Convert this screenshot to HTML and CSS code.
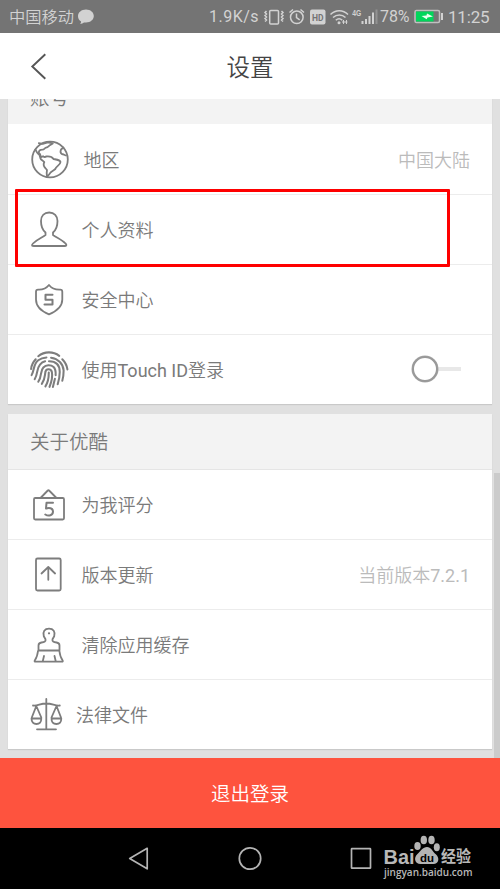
FILE: index.html
```html
<!DOCTYPE html>
<html lang="zh-CN">
<head>
<meta charset="utf-8">
<title>设置</title>
<link rel="stylesheet" href="styles.css">
</head>
<body>
<div class="phone">
  <div class="status">
    <span class="carrier">中国移动</span>
    <svg class="bubble" width="18" height="18" viewBox="77 8 18 18"><path fill="#d2d2d2" d="M86 9.500c4.500 0 7.800 2.900 7.800 6.500s-3.300 6.500-7.800 6.500l-2 0c-1 .8-2.300 1.300-3.800 1.500.6-.8.9-1.600.9-2.500-2-1.200-3.100-3.200-3.100-5.500 0-3.600 3.500-6.500 8-6.500z"/></svg>
    <span class="speed">1.9K/s</span>
    <svg class="signals" width="115" height="24" viewBox="263 5 115 24" fill="none" stroke="#d2d2d2" stroke-width="1.500">
      <rect x="269.700" y="10.500" width="8.800" height="13.500" rx="1"/>
      <path d="M266.500 11l-1.500 1.500 1.500 1.500-1.500 1.500 1.500 1.500-1.500 1.500 1.500 1.500-1.500 1.500M281.500 11l1.500 1.500-1.500 1.500 1.500 1.500-1.500 1.500 1.500 1.500-1.500 1.500 1.500 1.500"/>
      <circle cx="296.800" cy="17.300" r="6.300"/><path d="M296.500 13.500v4l3.200 2.300M289.500 12.500l3.500-3M304 12.500l-3.500-3"/>
      <rect x="310" y="9.500" width="15.500" height="15" rx="2" fill="#d2d2d2" stroke="none"/>
      <text class="hd" x="317.800" y="20.700">HD</text>
      <path d="M330.500 14.500c5-5 12.500-5 17.500 0M333 17.500c3.700-3.500 9-3.500 12.500 0M335.800 20.300c2-2 4.500-2 6.500 0"/>
      <circle cx="339" cy="22.800" r="1.500" fill="#d2d2d2" stroke="none"/><path stroke-width="1" d="M343.500 20v4M346.500 20v4M342 22h5.500"/>
      <text class="net" x="352.300" y="15.500" textLength="9" lengthAdjust="spacingAndGlyphs">4G</text>
      <path stroke-width="2" d="M362.500 21v3M366 19v5M369.500 16v8M373 12.500v11.500"/><path stroke="#929292" stroke-width="2" d="M376.500 9.500v14.500"/>
    </svg>
    <span class="percent">78%</span>
    <svg class="battery" width="29" height="16" viewBox="414 8 29 16"><rect x="415" y="9.500" width="24.500" height="12" rx="1.500" fill="#747474" stroke="#c0c0c0" stroke-width="1.500"/><path fill="#00d65b" d="M416 10.500h17.500v10H416z"/><path fill="#e8ffef" d="M421.500 15l5-.5.500-2 6 3-5.500 1-.8 1.800z"/><path stroke="#d2d2d2" stroke-width="2" d="M442 12v7"/></svg>
    <span class="clock">11:25</span>
  </div>

  <div class="titlebar">
    <svg class="back" width="20" height="30" viewBox="29 51 20 30" fill="none" stroke="#555" stroke-width="1.900"><path d="M45.300 54.200L32.300 66.500l13 12.300"/></svg>
    <h1>设置</h1>
  </div>

  <main class="content">
    <section class="card first">
      <h2>账号</h2>
      <div class="row"><svg class="icon" viewBox="27 137 44 44"><circle cx="50" cy="159.500" r="17.800"/><path d="M35.500 149.500c1 2.500 2 4.500 4 5.500l1 3.500c.3 1.500 2.500 2 3.800 3.500-1 2-.5 4.500 1 6l1.700 2c-.5 2.300-.5 4.500 0 7l2.500-3c1-2.500 4-3.200 5.800-5 .5-3 5-3.500 5.200-7-.5-2.300-4.500-2.500-7-3-1.700-3-5-2.800-7.500-2.500-1 1-2 .5-3-.3l-2 1c-.5-2-.5-3.500-2-4-.5-1.800.5-3 1.800-3.300 2.200 0 3.500-.5 4.500-2 2-.2 3.500-1.500 5-3l2.500-1.500-5-1-5 1.500-4-.7M63.500 147.500l-2.500 2c-.8 2-.8 3.500.8 4.500 1.500 0 2.500 1 4.200 1.500"/></svg><span class="label region">地区</span><span class="value">中国大陆</span></div>
      <div class="row highlighted"><svg class="icon" viewBox="27 207 44 44"><path d="M49.200 212.500c-5 0-8.200 3.500-8.200 8.500 0 5.500 1.500 9 4.500 11.500v2.500c-4 2.800-8.800 4.500-12.500 8.500-2 2.200-.8 2.500 1 2.500h30.500c2 0 2.500-1 1-2.500-3.500-3.700-8.500-5.700-12.500-8.500v-2.500c3-2.500 4.500-6 4.500-11.500 0-5-3.300-8.500-8.300-8.500z"/></svg><span class="label">个人资料</span></div>
      <div class="row"><svg class="icon" viewBox="27 277 44 44"><path d="M49 285c-3 3.800-7.500 4.800-11 4.600-1.600 0-2 .7-2 2.200v7.700c0 7 6 12 13 14.800 7-2.800 13.300-7.800 13.300-14.800v-7.700c0-1.500-.5-2.200-2-2.200-3.500.2-8.300-.8-11.300-4.600z"/><path stroke-width="2" d="M52.500 294.800h-7v4.900h7v4.800h-8"/></svg><span class="label">安全中心</span></div>
      <div class="row"><svg class="icon finger" viewBox="27.500 347 43 43"><path d="M38.500 355c6-4.800 14.500-5 20.500-.3M31.500 367.500c.3-3.500 2-6.800 4.500-9.500M62 358c2.700 2.700 4.500 6 5 10M32 373.500c3-5.500 1.500-10.500 6.500-14.500 1.800-1.400 5-2.600 8-2.800M51 356.500c7 1 12 6 12.300 12.500 0 3.500-.2 6.500-1.300 10M35 377.500c3.500-5.500 1.500-10 5.200-14.300 1.500-1.800 3.500-2.800 5-3.200M49 360c7 0 10.500 4 10.500 10.500 0 4.500-.8 8-2 12M38.500 380c4-6 1.500-10.500 5-14 2.500-2.500 7-3 10-.5 2 2 2.200 4.500 2 8M42 382c3.500-5 2.700-8 3.500-11.500.3-3.500 5.500-3.800 6.300 0 .8 4-.3 9.500-2.300 14.500M45.500 384.500c2.700-4 3.300-8 3.300-13.500M54.800 377l-2 8"/></svg><span class="label">使用<span class="latin">Touch ID</span>登录</span><span class="switch"></span></div>
    </section>
    <section class="card second">
      <h2>关于优酷</h2>
      <div class="row"><svg class="icon" viewBox="27 483 44 44"><rect x="34" y="498" width="30" height="21.500" rx="1.200"/><path d="M40.500 498l7.300-7.500c.5-.5.800-.5 1.300 0l7.400 7.500"/><path stroke-width="2" d="M53 502.800h-6.500l-.5 5.700c3-1.300 7-.5 7 3 0 4-4.500 5-7.700 3"/></svg><span class="label">为我评分</span></div>
      <div class="row"><svg class="icon" viewBox="27 553 44 44"><rect x="36" y="558.500" width="24.700" height="32" rx="1.500"/><path d="M48.300 579.800v-13M41.500 573.500l6.800-6.500 6.800 6.500"/></svg><span class="label">版本更新</span><span class="value">当前版本<span class="latin">7.2.1</span></span></div>
      <div class="row"><svg class="icon" viewBox="27 623 44 44"><circle cx="49" cy="633.300" r="1.100" fill="#777" stroke="none"/><path d="M38.500 650v-4.500c0-2 1-2.800 3-3 3-.3 4.500-1 4-3.300l-1.700-3c-1.300-4.500.8-7.500 5.200-7.500s6.500 3 5.200 7.500l-1.700 3c-.5 2.300 1 3 4 3.300 2 .2 3 1 3 3v4.500M38.500 650.500h21M38 651c-.5 4-1.500 7-3 9-.8 1.200-.5 1.700.7 1.700h26c1.200 0 1.500-.5.7-1.700-1.500-2-2.500-5-3-9M44 656l-1.300 5.500M54.500 656l1.300 5.500"/></svg><span class="label">清除应用缓存</span></div>
      <div class="row"><svg class="icon" viewBox="27 693 44 44"><path d="M46.300 699v30M37 729.300h19M33 705.500c5 .5 7-2 13.300-2s8.500 2.500 13.500 2M36.300 706l-4.500 11.500M36.300 706l5 11.500M56.500 706l-5 11.500M56.500 706l4.500 11.500M31.500 718.500h9.800c0 3.500-2 5.500-4.900 5.500s-4.900-2-4.900-5.500zM51.500 718.500h9.800c0 3.500-2 5.500-4.900 5.500s-4.900-2-4.900-5.500z"/></svg><span class="label legal">法律文件</span></div>
    </section>
    <div class="scrollbar"></div>
  </main>

  <button class="logout">退出登录</button>

  <nav class="navbar">
    <svg width="24" height="26" viewBox="127 846 24 26"><path d="M147.200 848.300v20.500l-17.500-10.300z"/></svg>
    <svg width="26" height="26" viewBox="237 846 26 26"><circle cx="250" cy="858.500" r="10.700"/></svg>
    <svg width="24" height="26" viewBox="349 846 24 26"><rect x="351.500" y="848.700" width="19" height="19.500" rx=".5"/></svg>
    <div class="watermark">
      <svg width="98" height="60" viewBox="380 829 98 60">
        <g fill="#b4b4b4" stroke="none"><ellipse cx="417.500" cy="846" rx="3.200" ry="4"/><ellipse cx="423.800" cy="840" rx="3.200" ry="4.300"/><ellipse cx="431.500" cy="840" rx="3.200" ry="4.300"/><ellipse cx="436.800" cy="847.300" rx="3" ry="4"/><path d="M427 847c4 0 5.500 4.500 8.800 7.300 4.500 4 2.700 9.900-2.600 9.700h-12.500c-5.500.2-7.500-5.700-3.500-9.700 3-2.800 5.800-7.300 9.800-7.300z"/></g>
        <text class="bai" x="383.500" y="863.500" textLength="31" lengthAdjust="spacingAndGlyphs">Bai</text>
        <text class="du" x="420" y="862" textLength="14" lengthAdjust="spacingAndGlyphs">du</text>
        <text class="jingyan" x="441" y="862" textLength="30" lengthAdjust="spacingAndGlyphs">经验</text>
        <text class="url" x="384" y="875.500" textLength="88.500" lengthAdjust="spacingAndGlyphs">jingyan.baidu.com</text>
      </svg>
    </div>
  </nav>
</div>
</body>
</html>
```

FILE: styles.css
```css
*, *::before, *::after { box-sizing: border-box; }
body {
  margin: 0;
  font-family: Roboto, "Noto Sans CJK SC", sans-serif;
  color: #7a7a7a;
}
.phone {
  width: 500px;
  height: 889px;
  display: flex;
  flex-direction: column;
  overflow: hidden;
}
svg { flex: none; display: block; }

.status {
  height: 33px;
  flex: none;
  display: flex;
  align-items: center;
  padding: 1px 0 0 9px;
  background: #747474;
  color: #d2d2d2;
  font-size: 16px;
  line-height: 24px;
  white-space: nowrap;
}
.carrier { width: 68px; padding-top: 1px; font-weight: 350; font-size: 16.3px; }
.speed { margin-left: 114px; width: 54px; letter-spacing: .5px; }
.percent { margin-left: 2px; width: 34px; letter-spacing: -.1px; }
.clock { margin-left: 5px; font-size: 17px; letter-spacing: -.2px; }
.hd { font: bold 8.5px Roboto, sans-serif; fill: #747474; stroke: none; text-anchor: middle; }
.net { font: bold 9px "Liberation Sans", sans-serif; fill: #d2d2d2; stroke: none; }

.titlebar {
  height: 66px;
  flex: none;
  display: grid;
  grid-template-columns: 60px 1fr 60px;
  align-items: center;
  background: #fff;
}
.back { margin-left: 29px; }
.titlebar h1 {
  margin: 0;
  padding-top: 3px;
  color: #444;
  font-size: 23.500px;
  font-weight: 350;
  line-height: 34px;
  text-align: center;
}

.content {
  position: relative;
  height: 659px;
  flex: none;
  padding: 0 8px;
  overflow: hidden;
  background: #e0e0e0;
}
.card {
  background: #fff;
  box-shadow: 0 1px 1px #c9c9c9;
}
.first { margin: -31px 0 10px; }
.card h2 {
  height: 56px;
  margin: 0;
  padding: 2px 0 0 22px;
  background: #f3f3f3;
  font-size: 19.500px;
  font-weight: 350;
  line-height: 56px;
}
.first h2 { padding-top: 3px; }
.second h2 { padding-top: 1px; border-bottom: 1px solid #e5e5e5; }
.row {
  position: relative;
  height: 70px;
  display: flex;
  align-items: center;
  padding: 0 22px 0 19px;
  font-size: 18px;
  font-weight: 350;
}
.first .row + .row { box-shadow: inset 0 1px #ececec; }
.second .row { border-bottom: 1px solid #ececec; }
.second .row:last-child { height: 69px; border-bottom: 0; }
.second .label, .second .value { margin-top: -1px; }
.highlighted::after {
  content: "";
  position: absolute;
  z-index: 1;
  left: 7px;
  top: -5px;
  width: 435px;
  height: 78px;
  border: 3px solid #fe0000;
  border-radius: 1px;
}
.icon {
  width: 44px;
  height: 44px;
  fill: none;
  stroke: #7d7d7d;
  stroke-width: 1.800;
  stroke-linejoin: round;
  stroke-linecap: round;
}
.finger { margin-top: 2px; stroke-width: 2; }
.latin { font-weight: 400; }
.label { margin-left: 10.500px; }
.region { margin-left: 12.500px; }
.legal { margin-left: 5px; }
.value { margin-left: auto; color: #bbb; }
.switch {
  width: 49px;
  height: 26px;
  margin: 0 9px 0 auto;
  background: linear-gradient(#e8e8e8, #e8e8e8) right center / 24px 4px no-repeat;
}
.switch::before {
  content: "";
  display: block;
  width: 26px;
  height: 26px;
  border: 2.500px solid #999;
  border-radius: 50%;
  background: #fff;
  box-shadow: 0 0 0 .5px #aaa;
}
.scrollbar {
  position: absolute;
  right: 0;
  top: 374px;
  width: 6px;
  height: 285px;
  background: #cbcbcb;
}

.logout {
  height: 70px;
  flex: none;
  padding: 3px 0 0;
  border: 0;
  background: #fe533e;
  color: #fff;
  font: 350 19.500px/66px Roboto, "Noto Sans CJK SC", sans-serif;
}
.navbar {
  position: relative;
  height: 61px;
  flex: none;
  display: grid;
  grid-template-columns: 110px 112px 24px;
  align-items: center;
  padding-left: 127px;
  background: #000;
  fill: none;
  stroke: #b4b4b4;
  stroke-width: 1.700;
  stroke-linejoin: round;
}
.watermark { position: absolute; left: 380px; top: 1px; }
.watermark text { stroke: none; fill: #b8b8b8; }
.bai { font: bold 20.500px "Liberation Sans", sans-serif; }
.watermark .du { font: bold 11px "Liberation Sans", sans-serif; fill: #000; }
.jingyan { font: bold 15.500px "Noto Sans CJK SC", sans-serif; }
.url { font: 600 10.500px "Open Sans", sans-serif; }
```
